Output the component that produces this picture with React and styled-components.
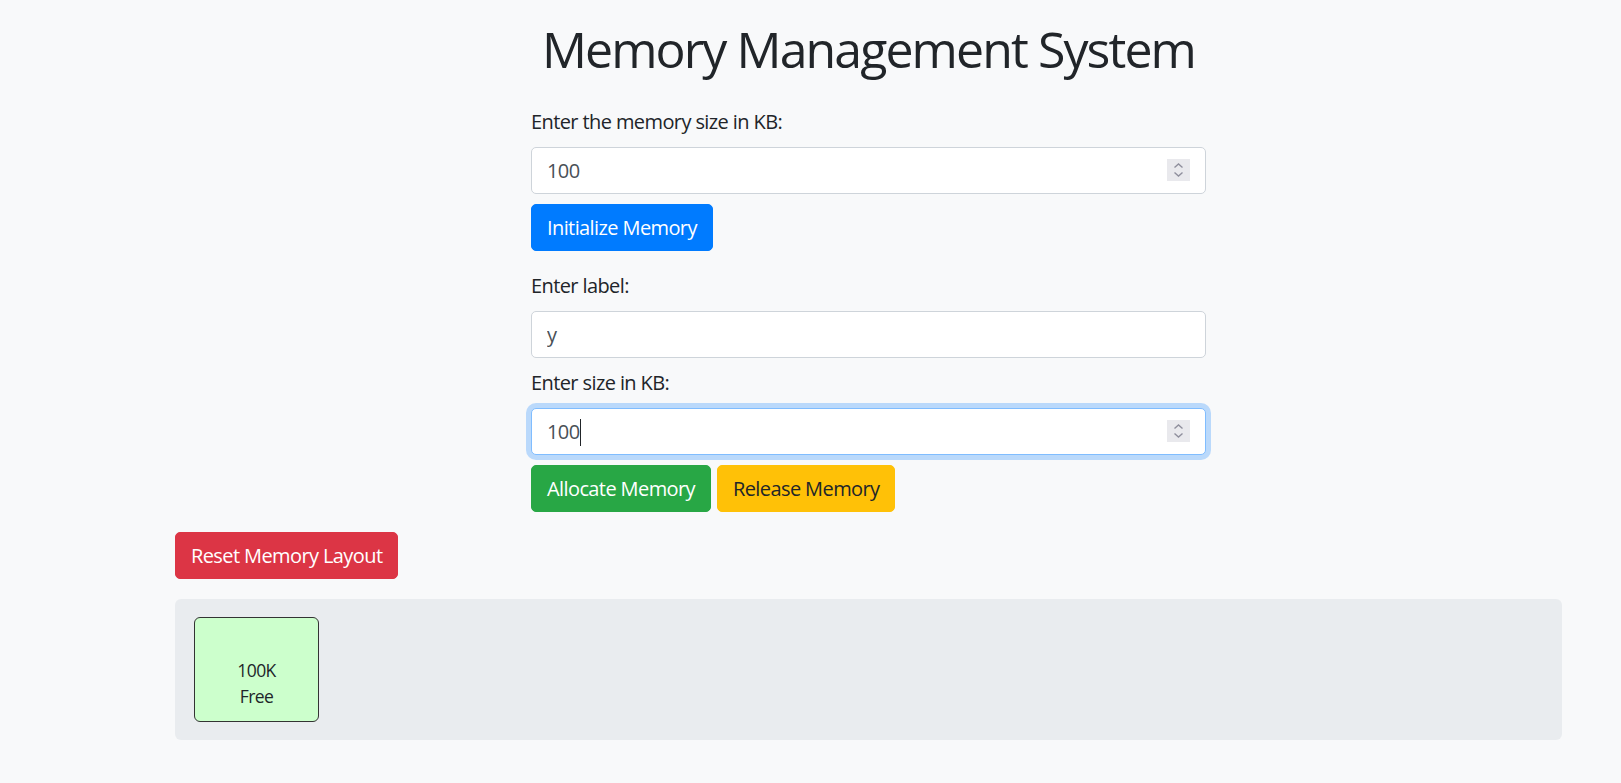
import React from "react";
import styled, { createGlobalStyle } from "styled-components";

const GlobalStyle = createGlobalStyle`
  body {
    margin: 0;
    background-color: #f8f9fa;
    color: #212529;
    font-family: "Open Sans", "Noto Sans", sans-serif;
    font-size: 20px;
    line-height: 1.5;
    letter-spacing: -0.03em;
  }
`;

const Container = styled.div`
  width: 1425px;
  box-sizing: border-box;
  margin-left: 156px;
  padding: 0 19px;
`;

const Title = styled.h1`
  margin: 19px 0 28px;
  font-size: 50px;
  font-weight: 400;
  line-height: 60px;
  letter-spacing: -0.038em;
  text-align: center;
`;

const FormColumn = styled.div`
  width: 675px;
  margin: 0 auto;
  display: flex;
  flex-direction: column;
`;

const Label = styled.label`
  display: block;
  line-height: 30px;
  margin: ${(p) => p.$top || 0}px 0 10px;
`;

const Field = styled.div`
  position: relative;
`;

const Input = styled.input`
  display: block;
  width: 100%;
  height: 47px;
  box-sizing: border-box;
  padding: 7px 15px;
  font-family: inherit;
  font-size: 20px;
  letter-spacing: inherit;
  color: #495057;
  background: #fff;
  border: 1px solid ${(p) => (p.$focused ? "#80bdff" : "#ced4da")};
  border-radius: 5px;
  box-shadow: ${(p) => (p.$focused ? "0 0 0 5px rgba(0,123,255,.25)" : "none")};
  outline: none;
  -moz-appearance: textfield;
  &::-webkit-inner-spin-button,
  &::-webkit-outer-spin-button {
    -webkit-appearance: none;
    margin: 0;
  }
`;

const Spinner = styled.svg`
  position: absolute;
  right: 16px;
  top: 12px;
  width: 23px;
  height: 22px;
  pointer-events: none;
`;

const Caret = styled.span`
  position: absolute;
  left: 49px;
  top: 11px;
  width: 1px;
  height: 27px;
  background-color: #212529;
  pointer-events: none;
`;

const ButtonRow = styled.div`
  display: flex;
  gap: 6px;
  margin-top: ${(p) => p.$top || 10}px;
`;

const colors = {
  primary: { bg: "#007bff", fg: "#fff" },
  success: { bg: "#28a745", fg: "#fff" },
  warning: { bg: "#ffc107", fg: "#212529" },
  danger: { bg: "#dc3545", fg: "#fff" },
};

const Button = styled.button`
  height: 47px;
  box-sizing: border-box;
  padding: 0 15px;
  font-family: inherit;
  font-size: 20px;
  letter-spacing: inherit;
  line-height: 30px;
  border-radius: 5px;
  border: 1px solid ${(p) => colors[p.$variant].bg};
  background-color: ${(p) => colors[p.$variant].bg};
  color: ${(p) => colors[p.$variant].fg};
  cursor: pointer;
`;

const MemoryPanel = styled.div`
  margin-top: 20px;
  padding: 18px 19px;
  background-color: #e9ecef;
  border-radius: 6px;
  display: flex;
  gap: 10px;
`;

const Block = styled.div`
  width: 125px;
  height: 105px;
  box-sizing: border-box;
  padding-top: 26px;
  background-color: #ccffcc;
  border: 1px solid #333;
  border-radius: 6px;
  display: flex;
  flex-direction: column;
  justify-content: center;
  align-items: center;
  font-size: 17.5px;
  line-height: 26px;
`;

function NumberSpinner() {
  return (
    <Spinner viewBox="0 0 23 22">
      <rect width="23" height="22" fill="#e9e9ed" />
      <path d="M7.5 8.5 L11.5 5 L15.5 8.5" fill="none" stroke="#8f8f9d" strokeWidth="1.4" />
      <path d="M7.5 13.5 L11.5 17 L15.5 13.5" fill="none" stroke="#8f8f9d" strokeWidth="1.4" />
    </Spinner>
  );
}

const blocks = [{ size: 100, label: "Free" }];

export default function App() {
  return (
    <>
      <GlobalStyle />
      <Container>
        <Title>Memory Management System</Title>
        <FormColumn>
          <Label>Enter the memory size in KB:</Label>
          <Field>
            <Input type="number" defaultValue="100" />
            <NumberSpinner />
          </Field>
          <ButtonRow>
            <Button $variant="primary">Initialize Memory</Button>
          </ButtonRow>

          <Label $top={20}>Enter label:</Label>
          <Input type="text" defaultValue="y" />

          <Label $top={10}>Enter size in KB:</Label>
          <Field>
            <Input type="number" defaultValue="100" $focused />
            <Caret />
            <NumberSpinner />
          </Field>
          <ButtonRow>
            <Button $variant="success">Allocate Memory</Button>
            <Button $variant="warning">Release Memory</Button>
          </ButtonRow>
        </FormColumn>

        <ButtonRow $top={20}>
          <Button $variant="danger">Reset Memory Layout</Button>
        </ButtonRow>

        <MemoryPanel>
          {blocks.map((b, i) => (
            <Block key={i}>
              <div>{b.size}K</div>
              <div>{b.label}</div>
            </Block>
          ))}
        </MemoryPanel>
      </Container>
    </>
  );
}
